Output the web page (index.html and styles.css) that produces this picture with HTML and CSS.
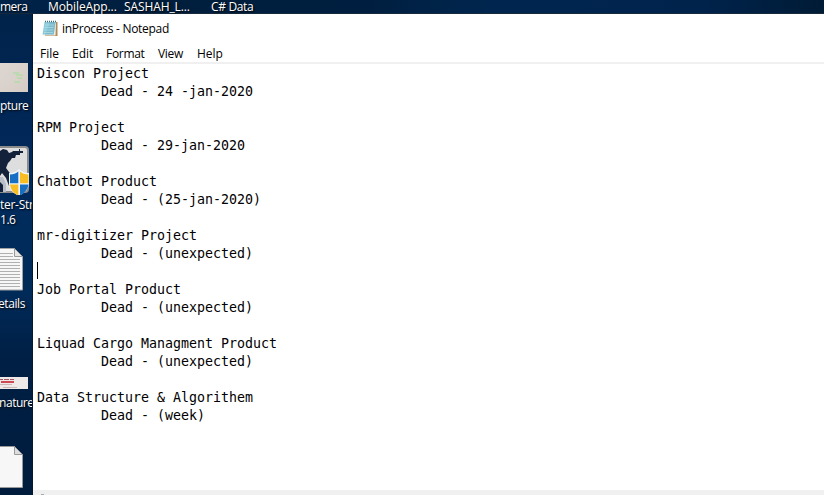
FILE: index.html
```html
<!DOCTYPE html>
<html lang="en">
<head>
<meta charset="utf-8">
<title>inProcess - Notepad</title>
<link rel="stylesheet" href="styles.css">
</head>
<body>
<div class="desktop">
  <header class="top-labels">
    <span class="t1">mera</span><span class="t2">MobileApp...</span><span class="t3">SASHAH_L...</span><span class="t4">C# Data</span>
  </header>
  <div class="main">
    <aside class="icons">
      <div class="item capture">
        <svg width="28" height="29" viewBox="0 0 28 29"><defs><linearGradient id="g" x2="1" y2="1"><stop stop-color="#ded6d2"/><stop offset="1" stop-color="#d5cdc4"/></linearGradient></defs><path fill="url(#g)" d="M0 0h28v29H0z"/><path d="M13 10h6M16 12h7M17 15h5M14 19h6" stroke="#a9e0a0" stroke-width="1.3" opacity=".8"/></svg>
        <span class="label">pture</span>
      </div>
      <div class="item strike">
        <svg width="29" height="49" viewBox="0 0 29 49"><rect x="-8" y="1" width="36" height="45" rx="3" fill="#dedede" stroke="#8b8b8b" stroke-width="2"/><path fill="#14213a" d="M0 5l3-2 4 1 2 3 3-1 1-1h6V3h1v2h3v2h-3v2h-4l-1 3h-3l-2 3-2 2-2 5 6 8 3 10H9L6 32l-4-5-2 3z"/><path fill="#b8bec8" d="M0 31h3l3 7v8H0z"/><path fill="#14213a" d="M0 36l3 3v7H0z"/><path fill="#f0f4f8" d="M19 23q4 4 10 4v11q-1 7-10 12Q10 46 9 39V27q6 0 10-4z"/><path fill="#176fc4" d="M18.300 25.500v11.800H10V28.500q5 0 8.300-3zM20 38.600h8.500q-1 7-8.500 11z"/><path fill="#f7bd22" d="M20 25.500q3 3 8.500 3v8.800H20zM10 38.600h8.300v11Q11 46 10 38.600z"/></svg>
        <span class="label counter">nter-Str</span>
        <span class="label version">1.6</span>
      </div>
      <div class="item details">
        <svg width="23" height="43" viewBox="0 0 23 43"><path fill="#f7f7f7" stroke="#a3a3a3" d="M-2 .5h16.500l8 8v33.500H-2z"/><path stroke="#b0b0b0" d="M0 5.500h13M0 8.500h13M0 11.500h20M0 14.500h20M0 17.500h20M0 20.500h20M0 23.500h20M0 26.500h20M0 29.500h20M0 32.500h20M0 35.500h20M0 38.500h20"/><path fill="#e6e6e6" stroke="#999" d="M14.500.5v8h8z"/></svg>
        <span class="label">etails</span>
      </div>
      <div class="item signature">
        <svg width="28" height="12" viewBox="0 0 28 12"><path fill="#eee8e8" d="M0 0h28v12H0z"/><path fill="#a05560" d="M0 2h3v1H0zM4 2h5v1H4zM10 2h4v1h-4z"/><path fill="#cf4852" d="M1 4h13v2H1z"/><path fill="#cbb6b8" d="M0 7h12v1H0zM3 10h14v1H3z"/></svg>
        <span class="label">nature</span>
      </div>
      <div class="item blank">
        <svg width="23" height="43" viewBox="0 0 23 43"><path fill="#f7f7f7" stroke="#999" d="M-2 .5h16.500l8 8v33H-2z"/><path fill="#dedede" stroke="#999" d="M14.500.5v8h8z"/></svg>
      </div>
    </aside>
    <section class="window">
      <div class="titlebar">
        <svg width="16" height="17" viewBox="0 0 16 17"><path fill="#b08a55" d="M4 2h11.500v14H3z"/><path fill="#f2efe6" d="M3 2h11l-.500 13.500H1z"/><path fill="#8ccbdc" d="M2.500 2h11l-1.700 12.500H.500z"/><path fill="#6ba9bd" d="M8 2h5.500l-1.700 12.500H3z" opacity=".5"/><path stroke="#426d7c" stroke-width="1.500" stroke-dasharray="1 1" d="M3 1.500h11"/><path stroke="#b9e5ef" stroke-width=".6" d="M3 5h9M2.500 7.500h9M2.200 10h9M2 12.500h9"/></svg>
        <span class="title">inProcess - Notepad</span>
      </div>
      <nav class="menu"><span class="m1">File</span><span class="m2">Edit</span><span class="m3">Format</span><span class="m4">View</span><span class="m5">Help</span></nav>
      <div class="document">
<pre class="text">Discon Project
        Dead - 24 -jan-2020

RPM Project
        Dead - 29-jan-2020

Chatbot Product
        Dead - (25-jan-2020)

mr-digitizer Project
        Dead - (unexpected)
<i class="caret"></i>
Job Portal Product
        Dead - (unexpected)

Liquad Cargo Managment Product
        Dead - (unexpected)

Data Structure &amp; Algorithem
        Dead - (week)</pre>
      </div>
      <div class="scrollbar"><i class="arrow"></i></div>
    </section>
  </div>
</div>
</body>
</html>
```
FILE: styles.css
```css
* { box-sizing: border-box; }
body { margin: 0; font: 12px/15px "Open Sans", "Noto Sans", sans-serif; }
svg { display: block; flex: none; }
.desktop {
  width: 824px; height: 495px; overflow: hidden;
  display: flex; flex-direction: column;
  background: linear-gradient(90deg, #00234a, #001e3c 20%, #001f40 45%, #00264f 60%, #00234c 85%, #001b35);
}
.top-labels {
  height: 14px; flex: none; display: flex;
  border-bottom: 1px solid #172a3c;
  color: #fff; white-space: pre; text-shadow: 1px 1px 2px #000;
}
.top-labels span { flex: none; line-height: 14px; }
.t1 { width: 48px; letter-spacing: -.5px; }
.t2 { width: 76px; letter-spacing: -.1px; }
.t3 { width: 87px; letter-spacing: -.1px; }
.t4 { letter-spacing: -.35px; }
.main { flex: 1; min-height: 0; display: flex; }
.icons {
  width: 33px; flex: none; overflow: hidden; padding-top: 49px;
  display: flex; flex-direction: column;
  background: linear-gradient(#00234a, #00285a 30%, #002c5c 45%, #002a58 58%, #001f44 72%, #001c3d);
  border-right: 1px solid #06182d;
}
.item { flex: none; color: #fff; text-shadow: 1px 1px 2px #000; }
.label { display: block; white-space: nowrap; letter-spacing: -.45px; }
.capture { height: 83px; }
.capture .label { margin-top: 6px; }
.strike { height: 102px; }
.strike .label { margin-top: 2px; }
.strike .counter { margin-left: -7px; letter-spacing: -.3px; }
.strike .version { margin-top: 0; }
.details { height: 129px; }
.details .label { margin-top: 5px; margin-left: -2px; letter-spacing: -.4px; }
.signature { height: 69px; }
.signature .label { margin-top: 6px; margin-left: -1px; }
.window { flex: 1; min-width: 0; background: #fff; color: #000; display: flex; flex-direction: column; }
.titlebar { height: 30px; flex: none; display: flex; align-items: center; padding: 0 0 2px 9px; }
.title { margin-left: 4px; letter-spacing: -.28px; }
.menu { height: 18px; flex: none; display: flex; padding-left: 7px; line-height: 20px; }
.m1 { width: 32px; }
.m2 { width: 34px; }
.m3 { width: 52px; letter-spacing: -.3px; }
.m4 { width: 39px; letter-spacing: -.3px; }
.document { flex: 1; border-top: 2px solid #f0f0f0; padding: 1px 0 0 4px; }
.text { margin: 0; font: 13.29px/18px "DejaVu Sans Mono", monospace; }
.caret { display: inline-block; width: 1px; height: 17px; margin-top: -1px; background: #000; vertical-align: top; }
.scrollbar { height: 5px; flex: none; background: #f0f0f0; padding: 4px 0 0 8px; }
.arrow { display: block; width: 3px; height: 1px; background: #aaa; }
```
